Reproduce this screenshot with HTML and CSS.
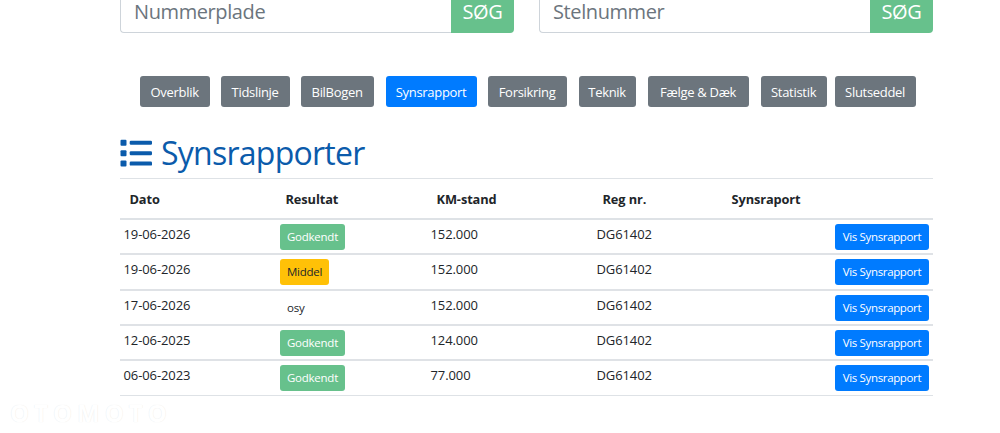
FILE: index.html
```html
<!DOCTYPE html>
<html lang="da">
<head>
    <meta charset="UTF-8">
    <meta name="viewport" content="width=device-width, initial-scale=1.0">
    <title>Synsrapporter</title>
    <link rel="stylesheet" href="styles.css">
</head>
<body>
    <div class="container">
        <div class="search-row">
            <div class="search-group">
                <input type="text" class="search-input" placeholder="Nummerplade">
                <button class="search-btn">SØG</button>
            </div>
            <div class="search-group">
                <input type="text" class="search-input" placeholder="Stelnummer">
                <button class="search-btn">SØG</button>
            </div>
        </div>
        <div class="nav-row">
            <button class="btn w-overblik"><span>Overblik</span></button>
            <button class="btn w-tidslinje"><span>Tidslinje</span></button>
            <button class="btn w-bilbogen"><span>BilBogen</span></button>
            <button class="btn active w-syn"><span>Synsrapport</span></button>
            <button class="btn w-forsikring"><span>Forsikring</span></button>
            <button class="btn w-teknik"><span>Teknik</span></button>
            <button class="btn w-hjul"><span>Fælge &amp; Dæk</span></button>
            <button class="btn w-statistik"><span>Statistik</span></button>
            <button class="btn w-slutseddel"><span>Slutseddel</span></button>
        </div>
        <h1 class="title">
            <svg class="title-icon" width="32" height="28" viewBox="0 0 32 28" fill="#0b5bab">
                <rect x="0.5" y="0.8" width="6" height="6" rx="1"/>
                <rect x="0.5" y="11.2" width="6" height="6" rx="1"/>
                <rect x="0.5" y="21.6" width="6" height="6" rx="1"/>
                <rect x="9.7" y="1.8" width="22.3" height="4" rx="1.2"/>
                <rect x="9.7" y="12.2" width="22.3" height="4" rx="1.2"/>
                <rect x="9.7" y="22.6" width="22.3" height="4" rx="1.2"/>
            </svg>
            <span>Synsrapporter</span>
        </h1>
        <table class="report-table">
            <thead>
                <tr>
                    <th class="col-dato">Dato</th>
                    <th class="col-resultat">Resultat</th>
                    <th class="col-km">KM-stand</th>
                    <th class="col-reg">Reg nr.</th>
                    <th>Synsraport</th>
                </tr>
            </thead>
            <tbody>
                <tr>
                    <td>19-06-2026</td>
                    <td><span class="badge green">Godkendt</span></td>
                    <td>152.000</td>
                    <td>DG61402</td>
                    <td class="right"><button class="badge blue">Vis Synsrapport</button></td>
                </tr>
                <tr>
                    <td>19-06-2026</td>
                    <td><span class="badge yellow">Middel</span></td>
                    <td>152.000</td>
                    <td>DG61402</td>
                    <td class="right"><button class="badge blue">Vis Synsrapport</button></td>
                </tr>
                <tr>
                    <td>17-06-2026</td>
                    <td><span class="badge">osy</span></td>
                    <td>152.000</td>
                    <td>DG61402</td>
                    <td class="right"><button class="badge blue">Vis Synsrapport</button></td>
                </tr>
                <tr>
                    <td>12-06-2025</td>
                    <td><span class="badge green">Godkendt</span></td>
                    <td>124.000</td>
                    <td>DG61402</td>
                    <td class="right"><button class="badge blue">Vis Synsrapport</button></td>
                </tr>
                <tr>
                    <td>06-06-2023</td>
                    <td><span class="badge green">Godkendt</span></td>
                    <td>77.000</td>
                    <td>DG61402</td>
                    <td class="right"><button class="badge blue">Vis Synsrapport</button></td>
                </tr>
            </tbody>
        </table>
    </div>
    <div class="watermark">OTOMOTO</div>
</body>
</html>
```
FILE: styles.css
```css
*{
    margin: 0;
    padding: 0;
    box-sizing: border-box;
}

body{
    height: 433px;
    overflow: hidden;
    background: #fff;
    color: #212529;
    font-family: "Open Sans", "Noto Sans", sans-serif;
    font-size: 13px;
}

button, input{
    font-family: inherit;
}

.container{
    width: 813px;
    margin-left: 120px;
}

.search-row{
    display: flex;
    justify-content: space-between;
    margin-top: -10px;
}

.search-group{
    display: flex;
    width: 394px;
    height: 43px;
}

.search-input{
    flex: 1;
    min-width: 0;
    padding: 0 13px 1px;
    border: 1px solid #ced4da;
    border-right: none;
    border-radius: 4px 0 0 4px;
    font-size: 20px;
    letter-spacing: -0.4px;
}

.search-input::placeholder{
    color: #6c757d;
}

.search-btn{
    width: 63px;
    padding-top: 1px;
    border: none;
    border-radius: 0 4px 4px 0;
    background: #67c18c;
    color: #fff;
    font-size: 20px;
    line-height: 20px;
    letter-spacing: -0.3px;
}

.nav-row{
    display: flex;
    margin-top: 43px;
    padding-left: 19.6px;
}

.btn{
    height: 31px;
    margin-right: 11px;
    border: none;
    border-radius: 3px;
    background: #6c757d;
    color: #fff;
    font-size: 13px;
    letter-spacing: -0.3px;
    white-space: nowrap;
}

.btn.active{
    background: #007bff;
}

.w-overblik{ width: 70px; }
.w-tidslinje{ width: 69px; }
.w-bilbogen{ width: 73px; margin-right: 12px; }
.w-syn{ width: 91px; }
.w-forsikring{ width: 79px; margin-right: 12px; }
.w-teknik{ width: 57px; margin-right: 12px; }
.w-hjul{ width: 101px; margin-right: 12px; }
.w-statistik{ width: 66px; margin-right: 8px; }
.w-slutseddel{ width: 81px; margin-right: 0; }

.title{
    display: flex;
    align-items: center;
    gap: 9px;
    height: 43px;
    margin-top: 28px;
    padding-bottom: 7px;
    color: #0b5bab;
    font-size: 32px;
    font-weight: 400;
    line-height: 36px;
    letter-spacing: -0.75px;
}

.title-icon{
    margin-top: -1px;
}

.report-table{
    width: 813px;
    border-collapse: separate;
    border-spacing: 0;
    border-top: 1px solid #dee2e6;
    table-layout: fixed;
}

.report-table th{
    height: 41px;
    padding: 0 9px 0 9.5px;
    border-bottom: 2px solid #dee2e6;
    font-size: 12.8px;
    letter-spacing: -0.1px;
    text-align: left;
}

.report-table td{
    height: 35px;
    padding: 4px 4px 0 3.5px;
    border-bottom: 2px solid #dfe2e6;
    letter-spacing: -0.1px;
    line-height: 20px;
    vertical-align: top;
}

.report-table tr:nth-child(2) td{
    height: 36px;
}

.report-table tr:last-child td{
    border-bottom: 1px solid #dee2e6;
}

.col-dato{ width: 156px; }
.col-resultat{ width: 151px; }
.col-km{ width: 166px; }
.col-reg{ width: 129px; }

.report-table .right{
    text-align: right;
}

.badge{
    display: inline-block;
    height: 26px;
    padding: 0 7px 0 7.5px;
    border: none;
    border-radius: 3px;
    color: #212529;
    font-size: 11.5px;
    letter-spacing: -0.25px;
    line-height: 26px;
    vertical-align: top;
}

.green{
    background: #67c18c;
    color: #fff;
}

.yellow{
    background: #ffc107;
}

.blue{
    width: 94px;
    padding: 0;
    background: #007bff;
    color: #fff;
    letter-spacing: -0.35px;
}

.watermark{
    position: absolute;
    left: 10px;
    top: 398px;
    color: #fff;
    font-size: 24px;
    font-weight: 700;
    line-height: 30px;
    letter-spacing: 5px;
    text-shadow: 0 0 1px #e4e4e4;
}
```
